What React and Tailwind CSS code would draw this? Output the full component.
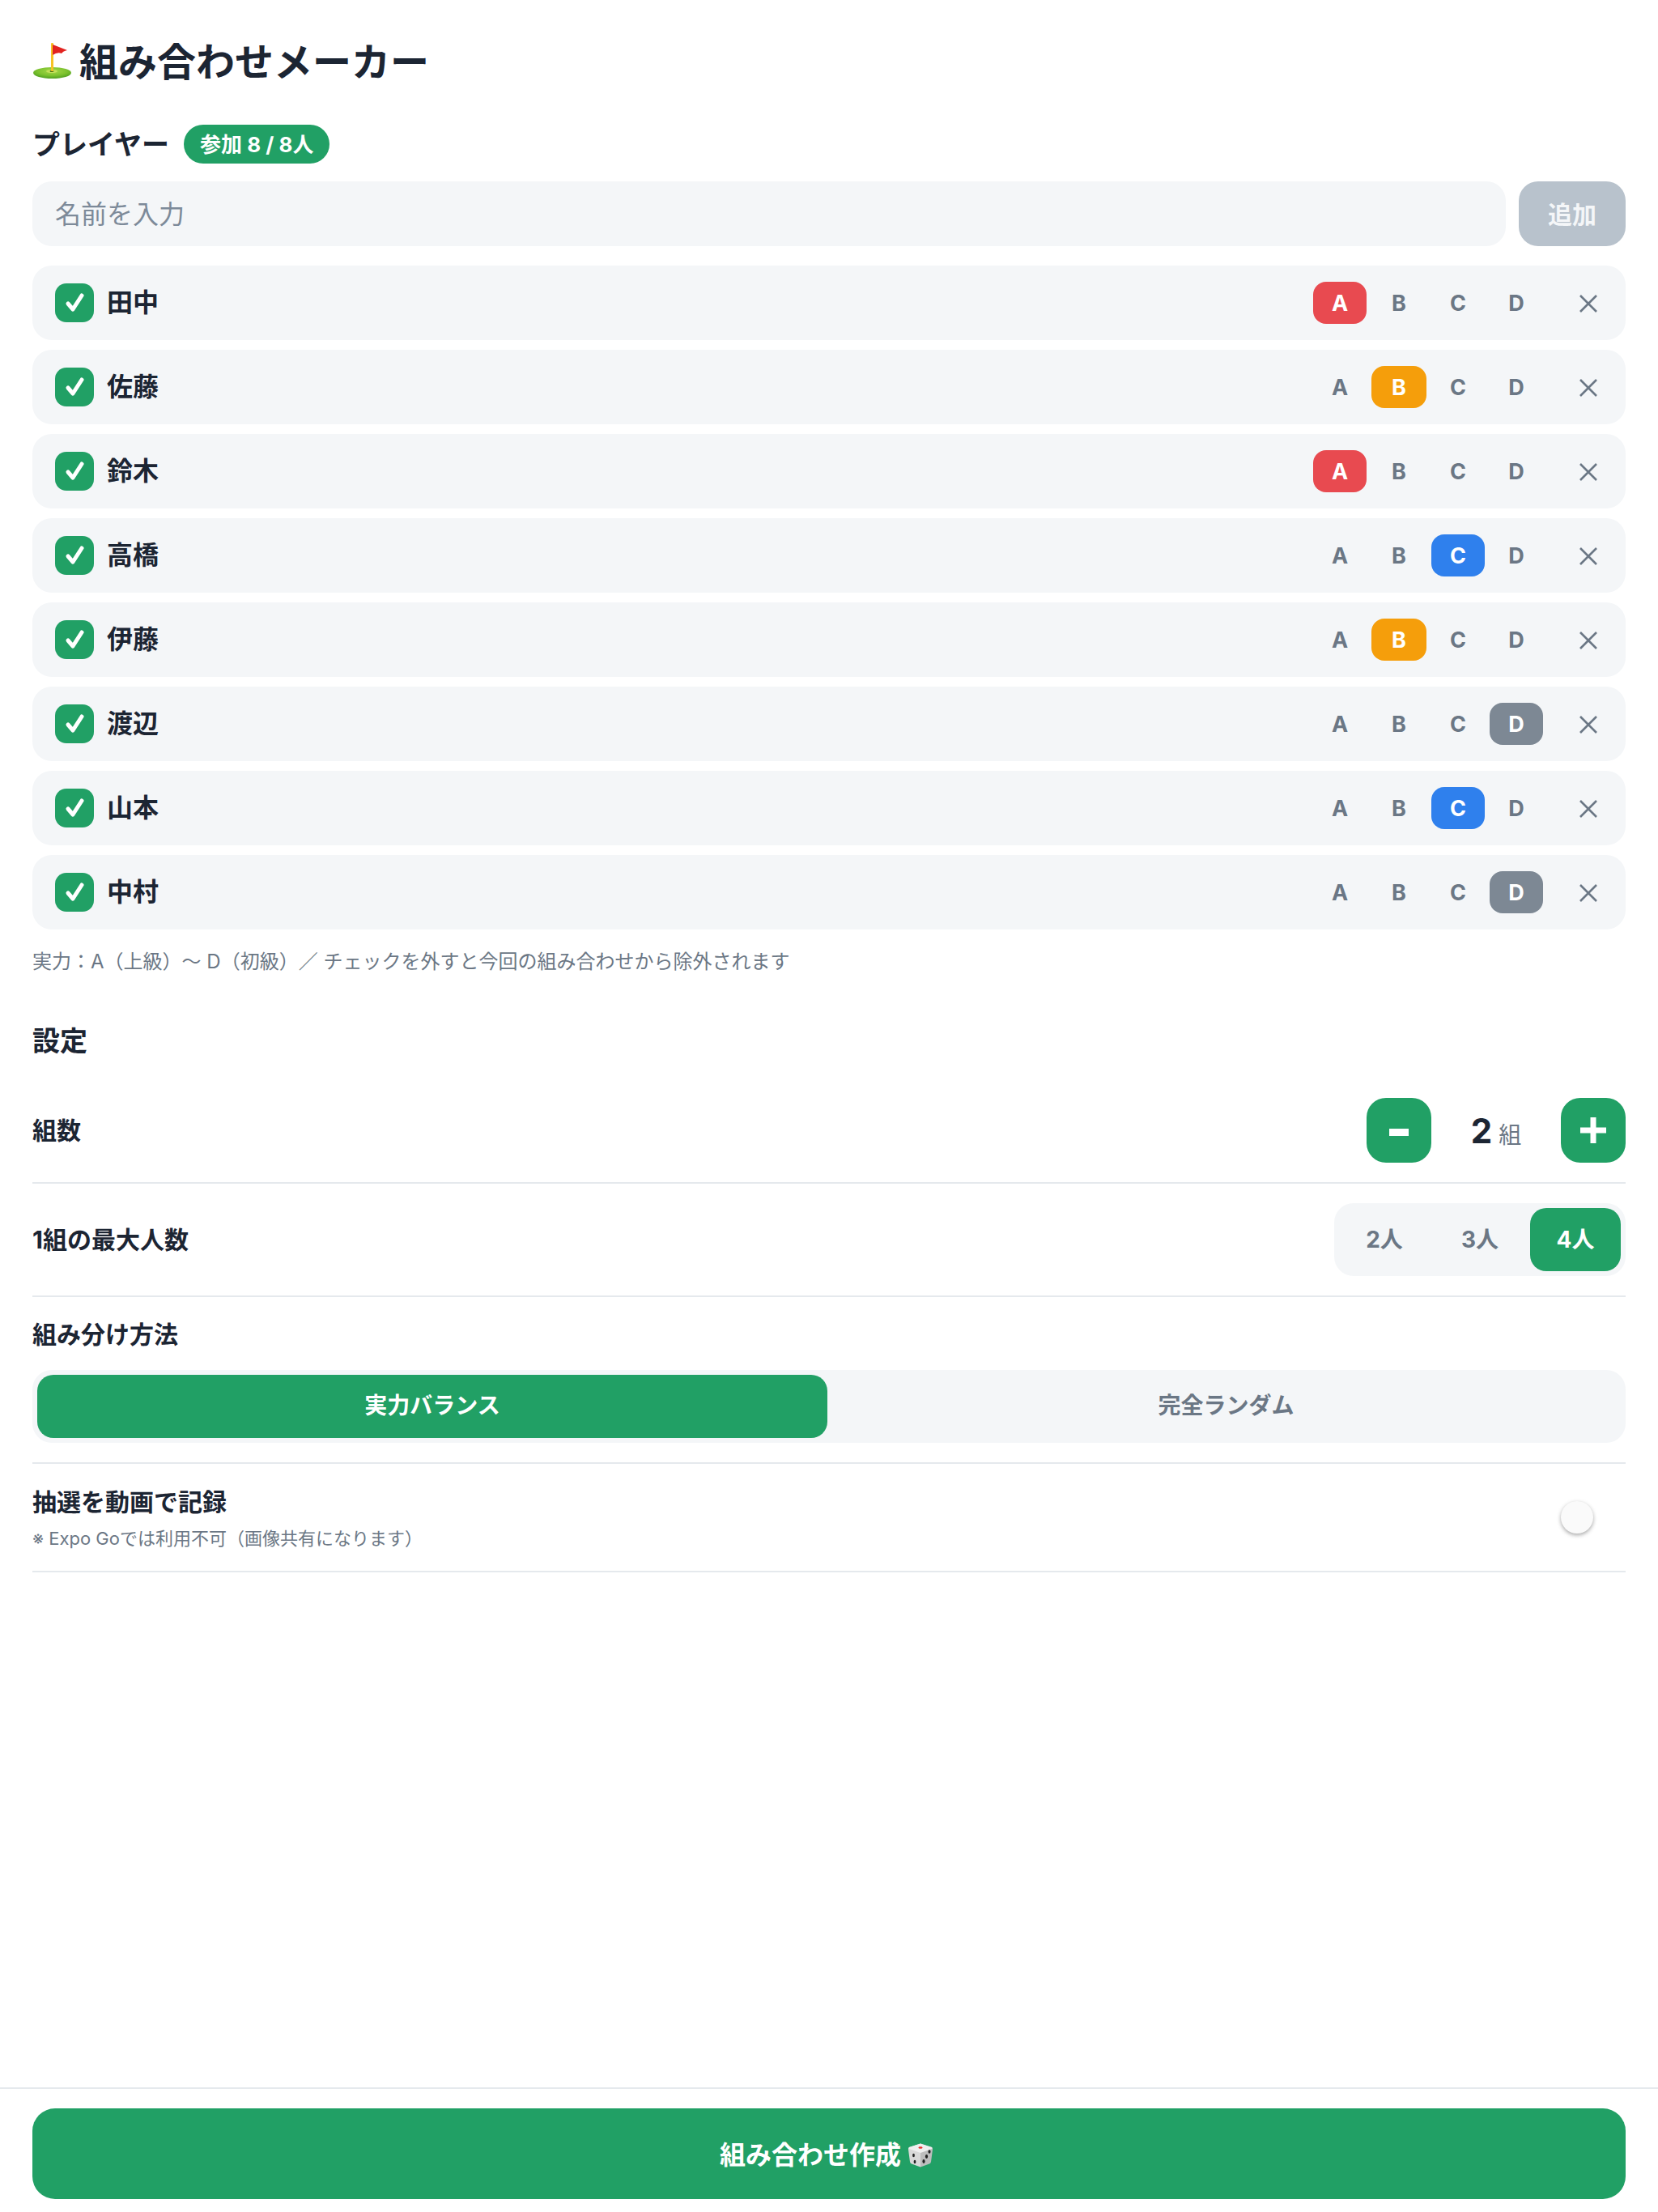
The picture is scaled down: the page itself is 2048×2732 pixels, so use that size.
import { useState } from "react";

const players = [
  { name: "田中", level: "A" },
  { name: "佐藤", level: "B" },
  { name: "鈴木", level: "A" },
  { name: "高橋", level: "C" },
  { name: "伊藤", level: "B" },
  { name: "渡辺", level: "D" },
  { name: "山本", level: "C" },
  { name: "中村", level: "D" },
];

const levelColors = {
  A: "bg-[#e84a50] text-white",
  B: "bg-[#f59e0b] text-white",
  C: "bg-[#2f80ed] text-white",
  D: "bg-[#7d8894] text-white",
};

const levelWidths = {
  A: "w-[66px]",
  B: "w-[68px]",
  C: "w-[66px]",
  D: "w-[66px]",
};

function FlagIcon() {
  return (
    <svg width="48" height="48" viewBox="0 0 48 48" className="shrink-0">
      <defs>
        <radialGradient id="green" cx="50%" cy="35%" r="65%">
          <stop offset="0%" stopColor="#a6d84a" />
          <stop offset="60%" stopColor="#7cc22e" />
          <stop offset="100%" stopColor="#4f9e20" />
        </radialGradient>
      </defs>
      <ellipse cx="24.5" cy="39" rx="23.5" ry="7" fill="url(#green)" />
      <ellipse cx="24" cy="37" rx="7" ry="2" fill="#c3e05a" />
      <ellipse cx="24" cy="37" rx="2.5" ry="1" fill="#3d6a14" />
      <rect x="23" y="2" width="3" height="35" rx="1" fill="#f7c325" />
      <path d="M25 4 L43 11 Q38 12 36 15 Q31 13 25 17 Z" fill="#e2231f" />
    </svg>
  );
}

function DieIcon() {
  return (
    <svg width="32" height="30" viewBox="0 0 32 30" className="shrink-0">
      <path d="M16 0.5 L30 5 Q31.5 6 31 8 L29 23 Q28.5 25 27 25.5 L16 29.5 Z" fill="#bdbdbd" />
      <path d="M16 0.5 L2 5 Q0.5 6 1 8 L3 23 Q3.5 25 5 25.5 L16 29.5 Z" fill="#d9d9d9" />
      <path d="M16 0.5 L30 5 Q31 6 30 7 L16 12 L2 7 Q1 6 2 5 Z" fill="#efefef" />
      <ellipse cx="16" cy="5.5" rx="2.6" ry="1.3" fill="#e2322d" />
      <ellipse cx="7.5" cy="15" rx="1.4" ry="2.2" fill="#222" />
      <ellipse cx="9" cy="23" rx="1.4" ry="2.2" fill="#222" />
      <ellipse cx="20" cy="22.5" rx="1.6" ry="2.4" fill="#222" />
      <ellipse cx="23.5" cy="16.5" rx="1.6" ry="2.4" fill="#222" />
      <ellipse cx="27" cy="10.5" rx="1.5" ry="2.2" fill="#222" />
    </svg>
  );
}

function PlayerRow({ name, level }) {
  return (
    <div className="flex h-[92px] items-center rounded-[24px] bg-[#f4f6f8] pl-[28px] pr-[34px]">
      <div className="flex h-[48px] w-[48px] items-center justify-center rounded-[14px] bg-[#21a065]">
        <svg width="48" height="48" viewBox="0 0 48 48" fill="none">
          <path d="M16 25 L22 32 L33 15" stroke="white" strokeWidth="5" strokeLinecap="round" strokeLinejoin="round" />
        </svg>
      </div>
      <span className="ml-[16px] flex-1 text-[32px] font-bold text-[#1c2533]">{name}</span>
      <div className="flex gap-[6px]">
        {["A", "B", "C", "D"].map((l) => (
          <div
            key={l}
            className={
              "flex h-[52px] items-center justify-center rounded-[16px] pt-[2px] text-[27px] font-bold " +
              levelWidths[l] +
              " " +
              (l === level ? levelColors[l] : "text-[#6b7785]")
            }
          >
            {l}
          </div>
        ))}
      </div>
      <svg width="24" height="24" viewBox="0 0 24 24" className="ml-[44px] mt-[2px]" fill="none">
        <path d="M2 2 L22 22 M22 2 L2 22" stroke="#6b7785" strokeWidth="2.6" />
      </svg>
    </div>
  );
}

export default function App() {
  const [name, setName] = useState("");

  return (
    <div className="flex h-[2732px] flex-col bg-white font-['Inter','Noto_Sans_CJK_JP',sans-serif] text-[#1c2533]">
      <div className="flex-1 px-[40px] pt-[40px]">
        <h1 className="flex h-[70px] items-center gap-[10px] text-[48px] font-bold">
          <FlagIcon />
          <span className="mt-[3px]">組み合わせメーカー</span>
        </h1>

        <div className="mt-[44px] flex h-[48px] items-center gap-[18px]">
          <h2 className="text-[34px] font-bold">プレイヤー</h2>
          <span className="flex h-[48px] items-center rounded-full bg-[#21a065] px-[20px] text-[26px] font-bold text-white">
            参加 8 / 8人
          </span>
        </div>

        <div className="mt-[22px] flex gap-[16px]">
          <input
            value={name}
            onChange={(e) => setName(e.target.value)}
            placeholder="名前を入力"
            className="h-[80px] flex-1 rounded-[24px] bg-[#f4f6f8] px-[28px] text-[32px] outline-none placeholder:text-[#7d8a99]"
          />
          <button className="h-[80px] w-[132px] rounded-[24px] bg-[#b8c2cc] pt-[2px] text-[30px] font-bold text-[#f4f6f8]">
            追加
          </button>
        </div>

        <div className="mt-[24px] flex flex-col gap-[12px]">
          {players.map((p) => (
            <PlayerRow key={p.name} name={p.name} level={p.level} />
          ))}
        </div>

        <p className="mt-[22px] text-[24px] leading-[36px] text-[#6b7785]">
          実力：A（上級）〜 D（初級）／ チェックを外すと今回の組み合わせから除外されます
        </p>

        <h2 className="mt-[56px] text-[34px] font-bold leading-[48px]">設定</h2>

        <div className="mt-[22px] flex items-center justify-between border-b-2 border-[#e5e9ed] py-[24px]">
          <span className="text-[30px] font-bold">組数</span>
          <div className="flex items-center">
            <button className="flex h-[80px] w-[80px] items-center justify-center rounded-[24px] bg-[#21a065]">
              <span className="mt-[5px] h-[9px] w-[24px] bg-white" />
            </button>
            <div className="flex w-[160px] items-baseline justify-center gap-[8px]">
              <span className="text-[42px] font-bold">2</span>
              <span className="text-[28px] text-[#6b7785]">組</span>
            </div>
            <button className="flex h-[80px] w-[80px] items-center justify-center rounded-[24px] bg-[#21a065]">
              <svg width="32" height="32" viewBox="0 0 32 32" fill="white">
                <rect x="0" y="12.5" width="32" height="7" />
                <rect x="12.5" y="0" width="7" height="32" />
              </svg>
            </button>
          </div>
        </div>

        <div className="flex items-center justify-between border-b-2 border-[#e5e9ed] py-[24px]">
          <span className="text-[30px] font-bold">1組の最大人数</span>
          <div className="flex gap-[6px] rounded-[24px] bg-[#f4f6f8] p-[6px]">
            {["2人", "3人", "4人"].map((t) => (
              <div
                key={t}
                className={
                  "flex h-[78px] w-[112px] items-center justify-center rounded-[20px] text-[28px] font-bold " +
                  (t === "4人" ? "bg-[#21a065] text-white" : "text-[#6b7785]")
                }
              >
                {t}
              </div>
            ))}
          </div>
        </div>

        <div className="border-b-2 border-[#e5e9ed] pb-[24px] pt-[26px]">
          <div className="text-[30px] font-bold leading-[40px]">組み分け方法</div>
          <div className="mt-[24px] flex gap-[5px] rounded-[24px] bg-[#f4f6f8] p-[6px]">
            <div className="flex h-[78px] w-[976px] shrink-0 items-center justify-center rounded-[20px] bg-[#21a065] pb-[2px] text-[28px] font-bold text-white">
              実力バランス
            </div>
            <div className="flex h-[78px] flex-1 items-center justify-center rounded-[20px] pb-[2px] text-[28px] font-bold text-[#6b7785]">
              完全ランダム
            </div>
          </div>
        </div>

        <div className="flex h-[134px] items-center justify-between border-b-2 border-[#e5e9ed]">
          <div>
            <div className="text-[30px] font-bold leading-[46px]">抽選を動画で記録</div>
            <div className="mt-[6px] text-[22px] leading-[32px] text-[#6b7785]">
              ※ Expo Goでは利用不可（画像共有になります）
            </div>
          </div>
          <div className="mr-[40px] h-[40px] w-[40px] rounded-full bg-[#fafafa] shadow-[0_2px_5px_rgba(0,0,0,0.35)]" />
        </div>
      </div>

      <div className="border-t-2 border-[#e5e9ed] px-[40px] pb-[16px] pt-[24px]">
        <button className="flex h-[112px] w-full items-center justify-center gap-[8px] rounded-[28px] bg-[#21a065] pr-[6px] text-[32px] font-bold text-white">
          <span className="mt-[3px]">組み合わせ作成</span>
          <span className="mt-[3px]">
            <DieIcon />
          </span>
        </button>
      </div>
    </div>
  );
}
